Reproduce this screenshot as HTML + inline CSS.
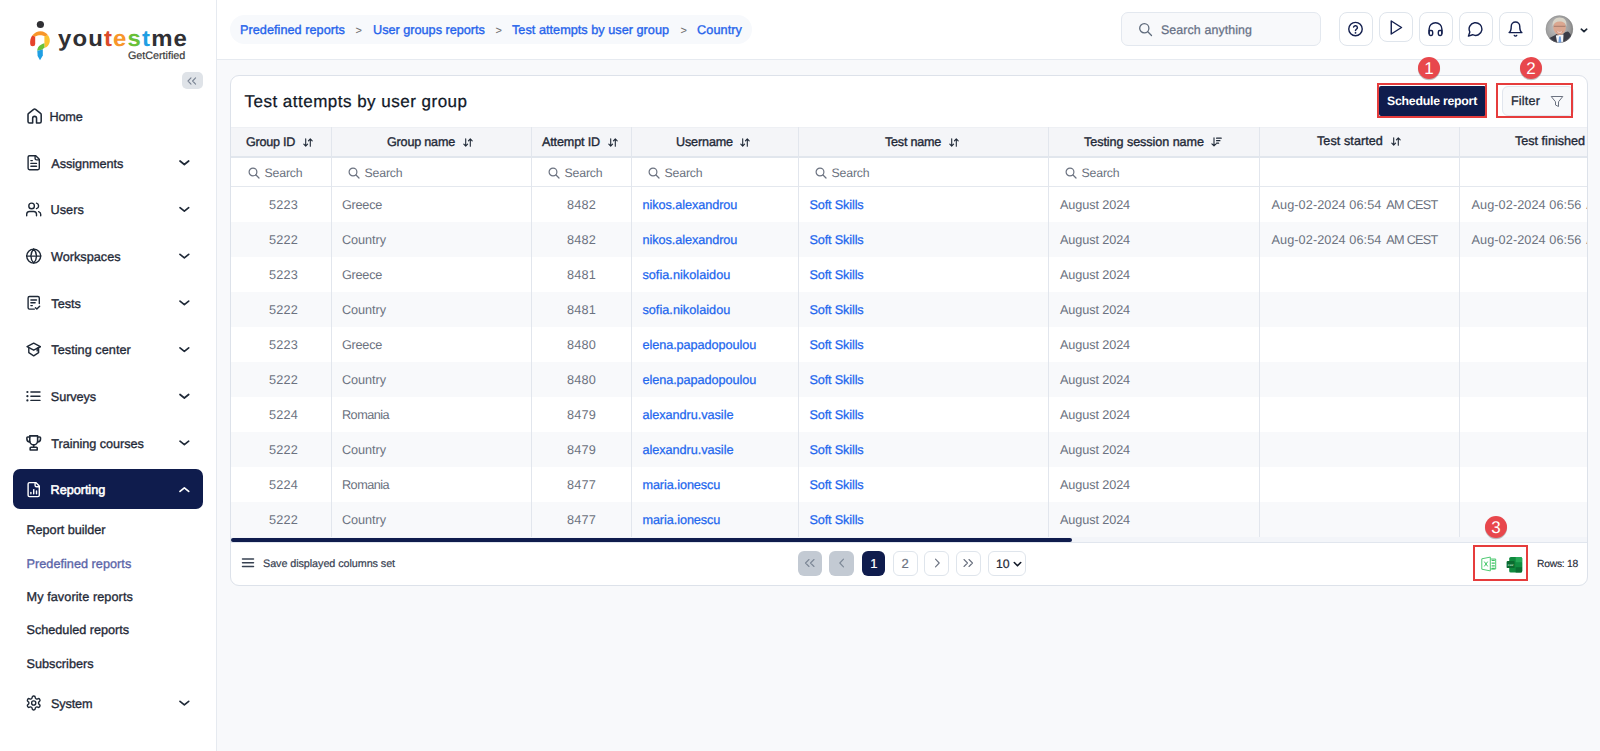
<!DOCTYPE html>
<html lang="en">
<head>
<meta charset="utf-8">
<title>Test attempts by user group</title>
<style>
*{box-sizing:border-box;margin:0;padding:0}
html,body{width:1600px;height:751px;overflow:hidden}
body{text-rendering:geometricPrecision;font-family:"Liberation Sans",sans-serif;background:#f8f9fb;color:#1a2233;position:relative;font-size:13px}
.abs{position:absolute}
.t{position:absolute;white-space:nowrap;line-height:1}
#side{position:absolute;left:0;top:0;width:217px;height:751px;background:#fff;border-right:1px solid #e6eaf0}
.logo{font-weight:bold;transform:scaleX(1.06);transform-origin:0 0}
.cert{color:#3a3a3a;-webkit-text-stroke:0.2px}
.nav{color:#1f2937;-webkit-text-stroke:0.33px}
.sub{color:#1f2937;-webkit-text-stroke:0.33px}
.ico{position:absolute;left:25px;width:18px;height:18px;fill:none;stroke:#1f2937;stroke-width:2;stroke-linecap:round;stroke-linejoin:round}
.chev{position:absolute;left:178.500px;width:12px;height:7px;fill:none;stroke:#1f2937;stroke-width:1.8;stroke-linecap:round;stroke-linejoin:round}
#top{position:absolute;left:217px;top:0;width:1383px;height:60px;background:#fff;border-bottom:1px solid #e6eaf0}
#card{position:absolute;left:230px;top:75px;width:1358px;height:511px;background:#fff;border:1px solid #dde2ea;border-radius:9px;overflow:hidden}
.bc{color:#2563eb;-webkit-text-stroke:0.35px}
.bcs{position:absolute;top:23.300px;font-size:11px;color:#6f6f6f;line-height:16px}
.srch{color:#667085;-webkit-text-stroke:0.25px}
.ib{position:absolute;width:33.500px;height:33.300px;border:1px solid #dfe5ec;border-radius:8px;background:#fff}
.ib svg{position:absolute;left:7.300px;top:6.300px;width:17px;height:17px;fill:none;stroke:#14204f;stroke-width:2;stroke-linecap:round;stroke-linejoin:round}
.title{color:#111827;-webkit-text-stroke:0.25px}
.th{color:#1f2937;-webkit-text-stroke:0.35px}
.flt{color:#6b7280}
.td{color:#6b7280}
.lnk{color:#2166ee;-webkit-text-stroke:0.25px}
.save{color:#374151;-webkit-text-stroke:0.2px}
.rows{color:#1f2937;-webkit-text-stroke:0.15px}
.pb{top:551px;height:24.600px;border-radius:6px;font-size:13px;line-height:24.600px;text-align:center;color:#6b7280}
.pb span{-webkit-text-stroke:0.2px}
.sched{font-weight:bold;color:#fff}
.filt{color:#1f2937;-webkit-text-stroke:0.3px}
.badge{width:22px;height:22px;border-radius:11px;background:#e8474c;color:#fff;box-shadow:0 1px 2px rgba(0,0,0,.35);overflow:visible}
.badge span{position:absolute;left:-39px;top:-39px;width:100px;height:100px;font-size:68px;line-height:100px;text-align:center;transform:scale(0.25);transform-origin:50% 50%}
.pb span.big{position:absolute;left:50%;top:50%;width:100px;height:100px;margin:-50px 0 0 -50px;font-size:52px;line-height:100px;text-align:center;transform:scale(0.25)}
.bc{font-size:12.7px}
.title{font-size:17px}
.th{font-size:12.6px}
.flt{font-size:12.3px}
.td{font-size:12.7px}
.save{font-size:10.8px}
.rows{font-size:10.3px}
.sched{font-size:12.3px}
.filt{font-size:12.6px}
.nav{font-size:12.7px}
.sub{font-size:12.7px}
.srch{font-size:12.4px}
.logo{font-size:22.6px}
.cert{font-size:10.8px}

</style>
</head>
<body>
<div id="side">
<svg class="abs" style="left:26px;top:18px" width="28" height="46" viewBox="26 18 28 46">
<circle cx="40.400" cy="24.500" r="3.600" fill="#303034"/>
<path d="M30.200 44 C29.900 41,30.500 38,32.200 35.600 L35.200 36.500 L35.200 44 A2.500 2.300 0 0 1 30.200 44Z" fill="#e6432a"/>
<path d="M32.200 35.600 C34.500 32.500,37.500 31.200,40.500 31.200 C43.800 31.200,46.500 32.800,48.200 35.600 L44.400 36.300 C43 35.300,42 35.200,40.300 35.200 C38.500 35.200,36.800 35.400,35.200 36.500Z" fill="#f8962a"/>
<path d="M44.400 36.300 L48.200 35.600 C50.300 38.500,50.500 43,48 45.800 C47 47,45.600 47.600,44.400 47.900 L44.400 43.200Z" fill="#fbc230"/>
<path d="M44.400 43.200 L44.400 47.900 C43.200 48.300,42.800 48.800,42.800 49.600 L37.300 50.700 C37.300 47,40 44.500,44.400 43.200Z" fill="#69c038"/>
<path d="M37.300 50.700 L42.800 49.600 L42.800 55.500 L40 60.300 L37.600 56Z" fill="#1f9fe3"/>
</svg>
<div class="t logo" style="left:57.5px;top:28.07px;letter-spacing:1.07px"><span style="color:#303034">you</span><span style="color:#da4a2b">t</span><span style="color:#f8962a">e</span><span style="color:#69c038">s</span><span style="color:#1f9fe3">t</span><span style="color:#303034">me</span></div>
<div class="t cert" style="left:128px;top:51.26px;letter-spacing:-0.03px">GetCertified</div>
<div class="abs" style="left:182px;top:72px;width:20.500px;height:16.600px;background:#dfe3e8;border-radius:5px"><svg class="abs" style="left:5.300px;top:4.500px" width="10" height="8" viewBox="0 0 10 8" fill="none" stroke="#7a8494" stroke-width="1.100" stroke-linecap="round" stroke-linejoin="round"><path d="M4 0.800L1 4 4 7.200"/><path d="M8.600 0.800L5.600 4 8.600 7.200"/></svg></div>

<div class="t nav" style="left:49.5px;top:110.85px;letter-spacing:-0.21px">Home</div>

<div class="t nav" style="left:51.3px;top:157.55px;letter-spacing:-0.07px">Assignments</div>


<div class="t nav" style="left:50.5px;top:204.25px;letter-spacing:0.03px">Users</div>


<div class="t nav" style="left:51px;top:250.95px;letter-spacing:0.00px">Workspaces</div>


<div class="t nav" style="left:51.3px;top:297.65px;letter-spacing:-0.00px">Tests</div>


<div class="t nav" style="left:51.3px;top:344.35px;letter-spacing:0.04px">Testing center</div>


<div class="t nav" style="left:50.8px;top:391.05px;letter-spacing:-0.09px">Surveys</div>


<div class="t nav" style="left:51.3px;top:437.75px;letter-spacing:-0.05px">Training courses</div>

<div class="abs" style="left:13px;top:469px;width:190px;height:40px;background:#0f1c4d;border-radius:7px"></div>

<div class="t nav" style="left:50.6px;top:484.45px;letter-spacing:-0.05px;color:#fff;-webkit-text-stroke:0.55px #fff">Reporting</div>

<div class="t sub" style="left:26.5px;top:524.35px;letter-spacing:-0.05px;color:#1f2937">Report builder</div>
<div class="t sub" style="left:26.5px;top:557.65px;letter-spacing:0.02px;color:#5a64a8">Predefined reports</div>
<div class="t sub" style="left:26.5px;top:591.05px;letter-spacing:0.07px;color:#1f2937">My favorite reports</div>
<div class="t sub" style="left:26.5px;top:624.35px;letter-spacing:-0.02px;color:#1f2937">Scheduled reports</div>
<div class="t sub" style="left:26.5px;top:657.75px;letter-spacing:0.01px;color:#1f2937">Subscribers</div>

<div class="t nav" style="left:51px;top:697.85px;letter-spacing:-0.14px">System</div>

<svg class="abs" style="left:0;top:0" width="216" height="751" viewBox="0 0 216 751" fill="none" stroke-linecap="round" stroke-linejoin="round"><svg x="25.30" y="106.70" width="18.6" height="18.6" viewBox="0 0 24 24" stroke="#1f2937" stroke-width="2"><path d="M9.500 21H5.500a2 2 0 0 1-2-2V10.300a2 2 0 0 1 .800-1.600l6.500-5.200a2 2 0 0 1 2.400 0l6.500 5.200a2 2 0 0 1 .800 1.600V19a2 2 0 0 1-2 2H14.500V15a2.500 2.500 0 0 0-5 0Z"/></svg><svg x="25.30" y="154.30" width="16.8" height="16.8" viewBox="0 0 24 24" stroke="#1f2937" stroke-width="2"><path d="M15 2H6a2 2 0 0 0-2 2v16a2 2 0 0 0 2 2h12a2 2 0 0 0 2-2V7Z"/><path d="M14 2v4a2 2 0 0 0 2 2h4"/><path d="M10 9H8"/><path d="M16 13H8"/><path d="M16 17H8"/></svg><svg x="178" y="159.00" width="12" height="7" viewBox="0 0 12 7" stroke="#1f2937" stroke-width="1.700"><path d="M2 2l4.350 3.500 4.350-3.500"/></svg><svg x="25.30" y="201.00" width="16.8" height="16.8" viewBox="0 0 24 24" stroke="#1f2937" stroke-width="2"><path d="M16 21v-2a4 4 0 0 0-4-4H6a4 4 0 0 0-4 4v2"/><circle cx="9" cy="7" r="4"/><path d="M22 21v-2a4 4 0 0 0-3-3.87"/><path d="M16 3.13a4 4 0 0 1 0 7.75"/></svg><svg x="178" y="205.70" width="12" height="7" viewBox="0 0 12 7" stroke="#1f2937" stroke-width="1.700"><path d="M2 2l4.350 3.500 4.350-3.500"/></svg><svg x="25.30" y="247.70" width="16.8" height="16.8" viewBox="0 0 24 24" stroke="#1f2937" stroke-width="2"><circle cx="12" cy="12" r="10"/><path d="M12 2a14.5 14.5 0 0 0 0 20 14.5 14.5 0 0 0 0-20"/><path d="M2 12h20"/></svg><svg x="178" y="252.40" width="12" height="7" viewBox="0 0 12 7" stroke="#1f2937" stroke-width="1.700"><path d="M2 2l4.350 3.500 4.350-3.500"/></svg><svg x="25.30" y="294.40" width="16.8" height="16.8" viewBox="0 0 24 24" stroke="#1f2937" stroke-width="2"><path d="M20 13V5a2 2 0 0 0-2-2H6a2 2 0 0 0-2 2v14a2 2 0 0 0 2 2h7"/><path d="M8 8h8"/><path d="M8 12h6"/><path d="M8 16h2"/><path d="M14.5 19l2 2 4-4"/></svg><svg x="178" y="299.10" width="12" height="7" viewBox="0 0 12 7" stroke="#1f2937" stroke-width="1.700"><path d="M2 2l4.350 3.500 4.350-3.500"/></svg><svg x="25.30" y="341.10" width="16.8" height="16.8" viewBox="0 0 24 24" stroke="#1f2937" stroke-width="2"><path d="M12 3l9.5 5L12 13 2.500 8z"/><path d="M5 9.500V16.500l7 4.500 7-4.500V9.500"/><path d="M21.500 8l-4.500 2.500v3.500"/></svg><svg x="178" y="345.80" width="12" height="7" viewBox="0 0 12 7" stroke="#1f2937" stroke-width="1.700"><path d="M2 2l4.350 3.500 4.350-3.500"/></svg><svg x="25.30" y="387.80" width="16.8" height="16.8" viewBox="0 0 24 24" stroke="#1f2937" stroke-width="2"><path d="M3 6h.01" stroke-width="3.200"/><path d="M3 12h.01" stroke-width="3.200"/><path d="M3 18h.01" stroke-width="3.200"/><path d="M8 6h13"/><path d="M8 12h13"/><path d="M8 18h13"/></svg><svg x="178" y="392.50" width="12" height="7" viewBox="0 0 12 7" stroke="#1f2937" stroke-width="1.700"><path d="M2 2l4.350 3.500 4.350-3.500"/></svg><svg x="24.30" y="433.50" width="18.8" height="18.8" viewBox="0 0 24 24" stroke="#1f2937" stroke-width="2"><path d="M7 4.500H4.300a1 1 0 0 0-1 1V7a3.700 3.700 0 0 0 3.700 3.700"/><path d="M17 4.500h2.700a1 1 0 0 1 1 1V7a3.700 3.700 0 0 1-3.700 3.700"/><path d="M7 3h10v6.500a5 5 0 0 1-10 0z"/><path d="M12 14.500v3"/><path d="M8.500 17.500h7a1 1 0 0 1 1 1V21h-9v-2.500a1 1 0 0 1 1-1z"/></svg><svg x="178" y="439.20" width="12" height="7" viewBox="0 0 12 7" stroke="#1f2937" stroke-width="1.700"><path d="M2 2l4.350 3.500 4.350-3.500"/></svg><svg x="25.30" y="481.20" width="16.8" height="16.8" viewBox="0 0 24 24" stroke="#fff" stroke-width="2"><path d="M15 2H6a2 2 0 0 0-2 2v16a2 2 0 0 0 2 2h12a2 2 0 0 0 2-2V7Z"/><path d="M14 2v4a2 2 0 0 0 2 2h4"/><path d="M8 18v-2"/><path d="M12 18v-6"/><path d="M16 18v-4"/></svg><svg x="178" y="485.90" width="12" height="7" viewBox="0 0 12 7" stroke="#fff" stroke-width="1.700"><path d="M2 5.500L6.350 2l4.350 3.500"/></svg><svg x="25.30" y="694.60" width="16.8" height="16.8" viewBox="0 0 24 24" stroke="#1f2937" stroke-width="2"><path d="M12.220 2h-.44a2 2 0 0 0-2 2v.18a2 2 0 0 1-1 1.730l-.43.250a2 2 0 0 1-2 0l-.15-.08a2 2 0 0 0-2.730.730l-.22.380a2 2 0 0 0 .730 2.730l.15.100a2 2 0 0 1 1 1.720v.51a2 2 0 0 1-1 1.740l-.15.090a2 2 0 0 0-.730 2.730l.22.380a2 2 0 0 0 2.730.730l.15-.08a2 2 0 0 1 2 0l.43.250a2 2 0 0 1 1 1.730V20a2 2 0 0 0 2 2h.44a2 2 0 0 0 2-2v-.18a2 2 0 0 1 1-1.730l.43-.25a2 2 0 0 1 2 0l.15.080a2 2 0 0 0 2.730-.73l.22-.39a2 2 0 0 0-.73-2.730l-.15-.08a2 2 0 0 1-1-1.740v-.5a2 2 0 0 1 1-1.740l.15-.09a2 2 0 0 0 .73-2.730l-.22-.38a2 2 0 0 0-2.730-.73l-.15.080a2 2 0 0 1-2 0l-.43-.25a2 2 0 0 1-1-1.730V4a2 2 0 0 0-2-2z"/><circle cx="12" cy="12" r="3"/></svg><svg x="178" y="699.30" width="12" height="7" viewBox="0 0 12 7" stroke="#1f2937" stroke-width="1.700"><path d="M2 2l4.350 3.500 4.350-3.500"/></svg></svg>
</div>
<div id="top"></div>
<div class="abs" style="left:230px;top:14.500px;width:522px;height:29.500px;background:#f7f9fc;border-radius:15px"></div>
<div class="t bc" style="left:240px;top:24.45px;letter-spacing:0.03px">Predefined reports</div>
<div class="t bc" style="left:373px;top:24.45px;letter-spacing:-0.01px">User groups reports</div>
<div class="t bc" style="left:512px;top:24.45px;letter-spacing:0.02px">Test attempts by user group</div>
<div class="t bc" style="left:697px;top:24.45px;letter-spacing:0.08px">Country</div>
<div class="bcs" style="left:355.5px">&gt;</div>
<div class="bcs" style="left:495.5px">&gt;</div>
<div class="bcs" style="left:680.5px">&gt;</div>
<div class="abs" style="left:1120.800px;top:12.100px;width:200px;height:33.500px;background:#f8f9fb;border:1px solid #e3e8ef;border-radius:7px"></div>
<svg class="abs" style="left:1138px;top:22px" width="15" height="15" viewBox="0 0 15 15" fill="none" stroke="#5f6b7c" stroke-width="1.300" stroke-linecap="round"><circle cx="6.300" cy="6.300" r="4.600"/><path d="M9.800 9.800L13.500 13.500"/></svg>
<div class="t srch" style="left:1161px;top:23.50px;letter-spacing:0.10px">Search anything</div>
<div class="ib" style="left:1339px;top:12.4px"><svg viewBox="0 -0.800 24 24"><circle cx="12" cy="12" r="9.500"/><path d="M9.300 9.200a2.800 2.800 0 0 1 5.400.9c0 1.800-2.700 2.500-2.700 3.900" stroke-width="2.100"/><path d="M12 17.300h.01" stroke-width="2.600"/></svg></div>
<div class="ib" style="left:1379.3px;top:11.9px;height:30.300px"><svg viewBox="0.400 0 24 24"><path d="M5 2.800l14.500 9.200L5 21.200z"/></svg></div>
<div class="ib" style="left:1419px;top:12.4px"><svg viewBox="0 -0.800 24 24"><path d="M3 18v-6a9 9 0 0 1 18 0v6"/><path d="M21 19a2 2 0 0 1-2 2h-1a2 2 0 0 1-2-2v-3a2 2 0 0 1 2-2h3zM3 19a2 2 0 0 0 2 2h1a2 2 0 0 0 2-2v-3a2 2 0 0 0-2-2H3z"/></svg></div>
<div class="ib" style="left:1459px;top:12.4px"><svg viewBox="0 -0.800 24 24"><path d="M7.900 20A9 9 0 1 0 4 16.100L2 22Z"/></svg></div>
<div class="ib" style="left:1499px;top:12.4px"><svg viewBox="0 -0.800 24 24"><path d="M6 8a6 6 0 0 1 12 0c0 7 3 9 3 9H3s3-2 3-9"/><path d="M10.300 21a1.940 1.940 0 0 0 3.400 0"/></svg></div>
<svg class="abs" style="left:1544px;top:14px" width="30" height="30" viewBox="0 0 30 30">
<defs><clipPath id="av"><circle cx="15.400" cy="15.100" r="13.600"/></clipPath>
<radialGradient id="avbg" cx="0.45" cy="0.45" r="0.6"><stop offset="0" stop-color="#c9c9c9"/><stop offset="0.7" stop-color="#9b9b9b"/><stop offset="1" stop-color="#6a6a6a"/></radialGradient></defs>
<g clip-path="url(#av)">
<rect width="30" height="30" fill="url(#avbg)"/>
<path d="M3 30 L5.500 24 C8 22.500,11 21.500,12.500 20 L18.500 20.500 C20 18.500,22.500 17.500,24 17.500 C26.500 19.500,28.500 23,29 30Z" fill="#3b3c46"/>
<path d="M11.800 21.500 L13.500 30 L19 30 L19.500 20.500Z" fill="#f4f4f6"/>
<path d="M15 22.500 L14.300 29.500 L17.300 29.500 L16.800 22.500Z" fill="#6f9fe0"/>
<ellipse cx="15.600" cy="13.300" rx="6.300" ry="7.700" fill="#dba790"/>
<path d="M11.500 16.500 Q15.500 22.500 19.800 16.500 Q15.500 19.500 11.500 16.500Z" fill="#c98673"/>
<path d="M8.700 12.500 C7.800 6.500,11.500 3.500,15.500 3.500 C20.500 3.500,23.300 6.500,22.300 12.500 C21.500 9,19.500 7.600,15.600 7.600 C12 7.600,9.800 9,8.700 12.500Z" fill="#d9d4c8"/>
<path d="M9.800 12.300h11.600" stroke="#7a5a50" stroke-width="0.700" opacity="0.800"/>
<path d="M13.300 17.800 Q15.600 19.300 18 17.800" stroke="#f5e9e4" stroke-width="0.900" fill="none"/>
</g><circle cx="15.400" cy="15.100" r="13.400" fill="none" stroke="#8a8a8a" stroke-width="0.500" opacity="0.700"/></svg>
<svg class="abs" style="left:1578.700px;top:26.800px" width="10" height="7" viewBox="0 0 10 7" fill="none" stroke="#1f2937" stroke-width="1.700" stroke-linecap="round" stroke-linejoin="round"><path d="M2.300 2.200L5 4.600 7.700 2.200"/></svg>
<div id="card">
<div class="abs" style="left:-231px;top:-76px;width:1600px;height:751px">
<div class="t title" style="left:244.5px;top:92.71px;letter-spacing:0.49px">Test attempts by user group</div>
<div class="abs" style="left:231px;top:126.500px;width:1357px;height:31.500px;background:#f4f5f8;border-top:1px solid #eef0f4;border-bottom:2px solid #e1e6ed"></div>
<div class="abs" style="left:231px;top:187px;width:1357px;height:35px;background:#fff"></div>
<div class="abs" style="left:231px;top:222px;width:1357px;height:35px;background:#f8f9fb"></div>
<div class="abs" style="left:231px;top:257px;width:1357px;height:35px;background:#fff"></div>
<div class="abs" style="left:231px;top:292px;width:1357px;height:35px;background:#f8f9fb"></div>
<div class="abs" style="left:231px;top:327px;width:1357px;height:35px;background:#fff"></div>
<div class="abs" style="left:231px;top:362px;width:1357px;height:35px;background:#f8f9fb"></div>
<div class="abs" style="left:231px;top:397px;width:1357px;height:35px;background:#fff"></div>
<div class="abs" style="left:231px;top:432px;width:1357px;height:35px;background:#f8f9fb"></div>
<div class="abs" style="left:231px;top:467px;width:1357px;height:35px;background:#fff"></div>
<div class="abs" style="left:231px;top:502px;width:1357px;height:35px;background:#f8f9fb"></div>
<div class="abs" style="left:231px;top:186px;width:1357px;height:1.300px;background:#e4e8ee"></div>
<div class="abs" style="left:330.5px;top:127px;width:1.500px;height:410px;background:#e2e6ed"></div>
<div class="abs" style="left:530.5px;top:127px;width:1.500px;height:410px;background:#e2e6ed"></div>
<div class="abs" style="left:630.5px;top:127px;width:1.500px;height:410px;background:#e2e6ed"></div>
<div class="abs" style="left:797.5px;top:127px;width:1.500px;height:410px;background:#e2e6ed"></div>
<div class="abs" style="left:1047.5px;top:127px;width:1.500px;height:410px;background:#e2e6ed"></div>
<div class="abs" style="left:1258.5px;top:127px;width:1.500px;height:410px;background:#e2e6ed"></div>
<div class="abs" style="left:1458.5px;top:127px;width:1.500px;height:410px;background:#e2e6ed"></div>
<div class="t th" style="left:246px;top:136.23px;letter-spacing:-0.26px">Group ID</div>
<svg class="abs" style="left:303px;top:137.9px" width="10" height="9" viewBox="0 0 10 9" fill="none" stroke="#1f2937" stroke-width="1.100" stroke-linecap="round" stroke-linejoin="round"><path d="M2.700 0.800v7.200M0.800 6.200l1.900 1.900 1.900-1.900"/><path d="M7.300 8.200V1M5.400 2.800L7.300 0.900l1.900 1.900"/></svg>
<div class="t th" style="left:387px;top:136.23px;letter-spacing:-0.20px">Group name</div>
<svg class="abs" style="left:463px;top:137.9px" width="10" height="9" viewBox="0 0 10 9" fill="none" stroke="#1f2937" stroke-width="1.100" stroke-linecap="round" stroke-linejoin="round"><path d="M2.700 0.800v7.200M0.800 6.200l1.900 1.900 1.900-1.900"/><path d="M7.300 8.200V1M5.400 2.800L7.300 0.900l1.900 1.900"/></svg>
<div class="t th" style="left:542px;top:136.23px;letter-spacing:-0.15px">Attempt ID</div>
<svg class="abs" style="left:608px;top:137.9px" width="10" height="9" viewBox="0 0 10 9" fill="none" stroke="#1f2937" stroke-width="1.100" stroke-linecap="round" stroke-linejoin="round"><path d="M2.700 0.800v7.200M0.800 6.200l1.900 1.900 1.900-1.900"/><path d="M7.300 8.200V1M5.400 2.800L7.300 0.900l1.900 1.900"/></svg>
<div class="t th" style="left:676px;top:136.23px;letter-spacing:-0.14px">Username</div>
<svg class="abs" style="left:740px;top:137.9px" width="10" height="9" viewBox="0 0 10 9" fill="none" stroke="#1f2937" stroke-width="1.100" stroke-linecap="round" stroke-linejoin="round"><path d="M2.700 0.800v7.200M0.800 6.200l1.900 1.900 1.900-1.900"/><path d="M7.300 8.200V1M5.400 2.800L7.300 0.900l1.900 1.900"/></svg>
<div class="t th" style="left:885px;top:136.23px;letter-spacing:-0.23px">Test name</div>
<svg class="abs" style="left:949px;top:137.9px" width="10" height="9" viewBox="0 0 10 9" fill="none" stroke="#1f2937" stroke-width="1.100" stroke-linecap="round" stroke-linejoin="round"><path d="M2.700 0.800v7.200M0.800 6.200l1.900 1.900 1.900-1.900"/><path d="M7.300 8.200V1M5.400 2.800L7.300 0.900l1.900 1.900"/></svg>
<div class="t th" style="left:1084px;top:136.23px;letter-spacing:-0.06px">Testing session name</div>
<svg class="abs" style="left:1211px;top:137.4px" width="11" height="10" viewBox="0 0 11 10" fill="none" stroke="#1f2937" stroke-width="1.100" stroke-linecap="round" stroke-linejoin="round"><path d="M3 0.800v8M0.900 6.800L3 8.900l2.100-2.100"/><path d="M5.600 1.200h4.600M5.600 3.700h3.300M5.600 6.200h2" stroke-width="1.300"/></svg>
<div class="t th" style="left:1317px;top:135.23px;letter-spacing:0.07px">Test started</div>
<svg class="abs" style="left:1391px;top:136.9px" width="10" height="9" viewBox="0 0 10 9" fill="none" stroke="#1f2937" stroke-width="1.100" stroke-linecap="round" stroke-linejoin="round"><path d="M2.700 0.800v7.200M0.800 6.200l1.900 1.900 1.900-1.900"/><path d="M7.300 8.200V1M5.400 2.800L7.300 0.900l1.900 1.900"/></svg>
<div class="t th" style="left:1515px;top:135.23px;letter-spacing:-0.00px">Test finished</div>
<svg class="abs" style="left:247.5px;top:166.700px" width="12" height="12" viewBox="0 0 12 12" fill="none" stroke="#6b7280" stroke-width="1.200" stroke-linecap="round"><circle cx="5" cy="5" r="3.900"/><path d="M8 8l3 3"/></svg>
<div class="t flt" style="left:264.5px;top:166.79px;letter-spacing:-0.16px">Search</div>
<svg class="abs" style="left:347.5px;top:166.700px" width="12" height="12" viewBox="0 0 12 12" fill="none" stroke="#6b7280" stroke-width="1.200" stroke-linecap="round"><circle cx="5" cy="5" r="3.900"/><path d="M8 8l3 3"/></svg>
<div class="t flt" style="left:364.5px;top:166.79px;letter-spacing:-0.16px">Search</div>
<svg class="abs" style="left:547.5px;top:166.700px" width="12" height="12" viewBox="0 0 12 12" fill="none" stroke="#6b7280" stroke-width="1.200" stroke-linecap="round"><circle cx="5" cy="5" r="3.900"/><path d="M8 8l3 3"/></svg>
<div class="t flt" style="left:564.5px;top:166.79px;letter-spacing:-0.16px">Search</div>
<svg class="abs" style="left:647.5px;top:166.700px" width="12" height="12" viewBox="0 0 12 12" fill="none" stroke="#6b7280" stroke-width="1.200" stroke-linecap="round"><circle cx="5" cy="5" r="3.900"/><path d="M8 8l3 3"/></svg>
<div class="t flt" style="left:664.5px;top:166.79px;letter-spacing:-0.16px">Search</div>
<svg class="abs" style="left:814.5px;top:166.700px" width="12" height="12" viewBox="0 0 12 12" fill="none" stroke="#6b7280" stroke-width="1.200" stroke-linecap="round"><circle cx="5" cy="5" r="3.900"/><path d="M8 8l3 3"/></svg>
<div class="t flt" style="left:831.5px;top:166.79px;letter-spacing:-0.16px">Search</div>
<svg class="abs" style="left:1064.5px;top:166.700px" width="12" height="12" viewBox="0 0 12 12" fill="none" stroke="#6b7280" stroke-width="1.200" stroke-linecap="round"><circle cx="5" cy="5" r="3.900"/><path d="M8 8l3 3"/></svg>
<div class="t flt" style="left:1081.5px;top:166.79px;letter-spacing:-0.16px">Search</div>
<div class="t td" style="left:269px;top:199.45px;letter-spacing:0.19px">5223</div>
<div class="t td" style="left:342px;top:199.45px;letter-spacing:-0.27px">Greece</div>
<div class="t td" style="left:567px;top:199.45px;letter-spacing:0.19px">8482</div>
<div class="t td lnk" style="left:642.4px;top:199.45px;letter-spacing:-0.06px">nikos.alexandrou</div>
<div class="t td lnk" style="left:809.4px;top:199.45px;letter-spacing:-0.14px">Soft Skills</div>
<div class="t td" style="left:1060px;top:199.45px;letter-spacing:-0.11px">August 2024</div>
<div class="t td" style="left:1271.5px;top:199.45px;word-spacing:1.300px"><span style="word-spacing:0;letter-spacing:0.08px">Aug-02-2024 06:54</span> <span style="word-spacing:0;letter-spacing:-0.74px">AM CEST</span></div>
<div class="t td" style="left:1471.5px;top:199.45px;word-spacing:1.300px"><span style="word-spacing:0;letter-spacing:0.08px">Aug-02-2024 06:56</span> <span style="word-spacing:0;letter-spacing:-0.74px">AM CEST</span></div>
<div class="t td" style="left:269px;top:234.45px;letter-spacing:0.19px">5222</div>
<div class="t td" style="left:342px;top:234.45px;letter-spacing:-0.06px">Country</div>
<div class="t td" style="left:567px;top:234.45px;letter-spacing:0.19px">8482</div>
<div class="t td lnk" style="left:642.4px;top:234.45px;letter-spacing:-0.06px">nikos.alexandrou</div>
<div class="t td lnk" style="left:809.4px;top:234.45px;letter-spacing:-0.14px">Soft Skills</div>
<div class="t td" style="left:1060px;top:234.45px;letter-spacing:-0.11px">August 2024</div>
<div class="t td" style="left:1271.5px;top:234.45px;word-spacing:1.300px"><span style="word-spacing:0;letter-spacing:0.08px">Aug-02-2024 06:54</span> <span style="word-spacing:0;letter-spacing:-0.74px">AM CEST</span></div>
<div class="t td" style="left:1471.5px;top:234.45px;word-spacing:1.300px"><span style="word-spacing:0;letter-spacing:0.08px">Aug-02-2024 06:56</span> <span style="word-spacing:0;letter-spacing:-0.74px">AM CEST</span></div>
<div class="t td" style="left:269px;top:269.45px;letter-spacing:0.19px">5223</div>
<div class="t td" style="left:342px;top:269.45px;letter-spacing:-0.27px">Greece</div>
<div class="t td" style="left:567px;top:269.45px;letter-spacing:0.19px">8481</div>
<div class="t td lnk" style="left:642.4px;top:269.45px;letter-spacing:0.03px">sofia.nikolaidou</div>
<div class="t td lnk" style="left:809.4px;top:269.45px;letter-spacing:-0.14px">Soft Skills</div>
<div class="t td" style="left:1060px;top:269.45px;letter-spacing:-0.11px">August 2024</div>
<div class="t td" style="left:269px;top:304.45px;letter-spacing:0.19px">5222</div>
<div class="t td" style="left:342px;top:304.45px;letter-spacing:-0.06px">Country</div>
<div class="t td" style="left:567px;top:304.45px;letter-spacing:0.19px">8481</div>
<div class="t td lnk" style="left:642.4px;top:304.45px;letter-spacing:0.03px">sofia.nikolaidou</div>
<div class="t td lnk" style="left:809.4px;top:304.45px;letter-spacing:-0.14px">Soft Skills</div>
<div class="t td" style="left:1060px;top:304.45px;letter-spacing:-0.11px">August 2024</div>
<div class="t td" style="left:269px;top:339.45px;letter-spacing:0.19px">5223</div>
<div class="t td" style="left:342px;top:339.45px;letter-spacing:-0.27px">Greece</div>
<div class="t td" style="left:567px;top:339.45px;letter-spacing:0.19px">8480</div>
<div class="t td lnk" style="left:642.4px;top:339.45px;letter-spacing:-0.06px">elena.papadopoulou</div>
<div class="t td lnk" style="left:809.4px;top:339.45px;letter-spacing:-0.14px">Soft Skills</div>
<div class="t td" style="left:1060px;top:339.45px;letter-spacing:-0.11px">August 2024</div>
<div class="t td" style="left:269px;top:374.45px;letter-spacing:0.19px">5222</div>
<div class="t td" style="left:342px;top:374.45px;letter-spacing:-0.06px">Country</div>
<div class="t td" style="left:567px;top:374.45px;letter-spacing:0.19px">8480</div>
<div class="t td lnk" style="left:642.4px;top:374.45px;letter-spacing:-0.06px">elena.papadopoulou</div>
<div class="t td lnk" style="left:809.4px;top:374.45px;letter-spacing:-0.14px">Soft Skills</div>
<div class="t td" style="left:1060px;top:374.45px;letter-spacing:-0.11px">August 2024</div>
<div class="t td" style="left:269px;top:409.45px;letter-spacing:0.19px">5224</div>
<div class="t td" style="left:342px;top:409.45px;letter-spacing:-0.54px">Romania</div>
<div class="t td" style="left:567px;top:409.45px;letter-spacing:0.19px">8479</div>
<div class="t td lnk" style="left:642.4px;top:409.45px;letter-spacing:-0.04px">alexandru.vasile</div>
<div class="t td lnk" style="left:809.4px;top:409.45px;letter-spacing:-0.14px">Soft Skills</div>
<div class="t td" style="left:1060px;top:409.45px;letter-spacing:-0.11px">August 2024</div>
<div class="t td" style="left:269px;top:444.45px;letter-spacing:0.19px">5222</div>
<div class="t td" style="left:342px;top:444.45px;letter-spacing:-0.06px">Country</div>
<div class="t td" style="left:567px;top:444.45px;letter-spacing:0.19px">8479</div>
<div class="t td lnk" style="left:642.4px;top:444.45px;letter-spacing:-0.04px">alexandru.vasile</div>
<div class="t td lnk" style="left:809.4px;top:444.45px;letter-spacing:-0.14px">Soft Skills</div>
<div class="t td" style="left:1060px;top:444.45px;letter-spacing:-0.11px">August 2024</div>
<div class="t td" style="left:269px;top:479.45px;letter-spacing:0.19px">5224</div>
<div class="t td" style="left:342px;top:479.45px;letter-spacing:-0.54px">Romania</div>
<div class="t td" style="left:567px;top:479.45px;letter-spacing:0.19px">8477</div>
<div class="t td lnk" style="left:642.4px;top:479.45px;letter-spacing:-0.08px">maria.ionescu</div>
<div class="t td lnk" style="left:809.4px;top:479.45px;letter-spacing:-0.14px">Soft Skills</div>
<div class="t td" style="left:1060px;top:479.45px;letter-spacing:-0.11px">August 2024</div>
<div class="t td" style="left:269px;top:514.45px;letter-spacing:0.19px">5222</div>
<div class="t td" style="left:342px;top:514.45px;letter-spacing:-0.06px">Country</div>
<div class="t td" style="left:567px;top:514.45px;letter-spacing:0.19px">8477</div>
<div class="t td lnk" style="left:642.4px;top:514.45px;letter-spacing:-0.08px">maria.ionescu</div>
<div class="t td lnk" style="left:809.4px;top:514.45px;letter-spacing:-0.14px">Soft Skills</div>
<div class="t td" style="left:1060px;top:514.45px;letter-spacing:-0.11px">August 2024</div>
<div class="abs" style="left:231px;top:537px;width:1357px;height:5px;background:#f3f5f9"></div>
<div class="abs" style="left:231px;top:537.500px;width:840.500px;height:4.200px;background:#0f1c4d;border-radius:3px"></div>
<div class="abs" style="left:231px;top:542px;width:1357px;height:1px;background:#e1e6ee"></div>
<svg class="abs" style="left:241px;top:557px" width="14" height="12" viewBox="0 0 14 12" fill="none" stroke="#374151" stroke-width="1.500" stroke-linecap="round"><path d="M1.500 2h11M1.500 5.700h11M1.500 9.400h11"/></svg>
<div class="t save" style="left:263px;top:558.86px;letter-spacing:-0.07px">Save displayed columns set</div>
<div class="abs pb" style="left:798px;width:24.3px;background:#c3cad3;"><svg class="abs" style="left:50%;top:50%;margin:-5px 0 0 -6.0px" width="12" height="10" viewBox="0 0 12 10" fill="none" stroke="#7c8796" stroke-width="1.100" stroke-linecap="round" stroke-linejoin="round"><path d="M5 1.500L1.500 5 5 8.500M10 1.500L6.500 5 10 8.500"/></svg></div>
<div class="abs pb" style="left:829.2px;width:24.8px;background:#c3cad3;"><svg class="abs" style="left:50%;top:50%;margin:-5px 0 0 -6.0px" width="12" height="10" viewBox="0 0 12 10" fill="none" stroke="#7c8796" stroke-width="1.100" stroke-linecap="round" stroke-linejoin="round"><path d="M7.500 1.200L3.800 5l3.700 3.800"/></svg></div>
<div class="abs pb" style="left:861.6px;width:23.6px;background:#0f1c4d;"><svg class="abs" style="left:0;top:0" width="24" height="25" viewBox="0 0 24 25"><text transform="translate(11.800 17) scale(0.25)" font-family="Liberation Sans,sans-serif" font-size="52" fill="#fff" stroke="#fff" stroke-width="0.800" text-anchor="middle">1</text></svg></div>
<div class="abs pb" style="left:892.5px;width:25px;background:#fff;border:1px solid #dfe5ec;"><span>2</span></div>
<div class="abs pb" style="left:924.4px;width:24.8px;background:#fff;border:1px solid #dfe5ec;"><svg class="abs" style="left:50%;top:50%;margin:-5px 0 0 -6.0px" width="12" height="10" viewBox="0 0 12 10" fill="none" stroke="#6b7280" stroke-width="1.100" stroke-linecap="round" stroke-linejoin="round"><path d="M4.500 1.200L8.200 5 4.500 8.800"/></svg></div>
<div class="abs pb" style="left:955.7px;width:25px;background:#fff;border:1px solid #dfe5ec;"><svg class="abs" style="left:50%;top:50%;margin:-5px 0 0 -6.0px" width="12" height="10" viewBox="0 0 12 10" fill="none" stroke="#6b7280" stroke-width="1.100" stroke-linecap="round" stroke-linejoin="round"><path d="M2 1.500L5.500 5 2 8.500M7 1.500L10.500 5 7 8.500"/></svg></div>
<div class="abs pb" style="left:988px;width:37.600px;background:#fff;border:1px solid #dfe5ec"><span style="position:absolute;left:7px;top:0;color:#1f2937;font-size:12.300px">10</span><svg class="abs" style="left:23.800px;top:8.500px" width="9" height="7" viewBox="0 0 9 7" fill="none" stroke="#111827" stroke-width="1.600" stroke-linecap="round" stroke-linejoin="round"><path d="M1.300 1.500L4.500 4.800 7.700 1.500"/></svg></div>
<svg class="abs" style="left:1480.500px;top:556px" width="16" height="16" viewBox="0 0 16 16" fill="none" stroke="#3cc463" stroke-width="0.900">
<path d="M9.300 3h5.400v10H9.300"/><path d="M10.600 4.400h3.200M10.600 7.100h3.200M10.600 9.800h3.200M10.600 12.500h3.200" stroke-width="1.300"/><path d="M0.800 2.800L9.300 1.100v13.800L0.800 13.200z" fill="#fff"/><path d="M3.300 5.600l3.400 4.800M6.700 5.600l-3.400 4.800" stroke-width="1"/></svg>
<svg class="abs" style="left:1506px;top:555.700px" width="17" height="17" viewBox="0 0 17 18" preserveAspectRatio="none">
<rect x="3.200" y="1" width="13" height="16.500" rx="1.600" fill="#0f8a3e"/><path d="M9.700 1h4.900a1.600 1.600 0 0 1 1.600 1.600v4.400h-6.500z" fill="#27a857"/><path d="M9.700 7h6.500v5h-6.500z" fill="#118f42"/><path d="M9.700 12h6.500v3.900a1.600 1.600 0 0 1-1.600 1.600h-4.900z" fill="#0a6e32"/>
<rect x="0.600" y="5.400" width="8" height="7.400" rx="1" fill="#0b6b30"/><text x="4.600" y="10.200" font-size="3.400" font-family="Liberation Sans,sans-serif" font-weight="bold" fill="#bfe8cd" text-anchor="middle">csv</text></svg>
<div class="t rows" style="left:1537px;top:559.58px;letter-spacing:-0.24px">Rows: 18</div>
</div></div>
<div class="abs" style="left:1378.500px;top:85.600px;width:107px;height:30.500px;background:#0f1c4d;border-radius:2px"></div>
<div class="t sched" style="left:1387px;top:94.89px;letter-spacing:-0.24px">Schedule report</div>
<div class="abs" style="left:1501.500px;top:85.600px;width:72px;height:30.500px;background:#f8f9fb;border:1px solid #e1e6ee;border-radius:6px"></div>
<div class="t filt" style="left:1511px;top:94.93px;letter-spacing:0.17px">Filter</div>
<svg class="abs" style="left:1550px;top:95px" width="14" height="13" viewBox="0 0 14 13" fill="none" stroke="#6b7280" stroke-width="1" stroke-linejoin="round"><path d="M1.200 1.500h11.600L8.500 6.800v4.700L5.500 10V6.800z"/></svg>
<div class="abs" style="left:1376.800px;top:83.400px;width:110.500px;height:34.400px;border:2.600px solid #e63c3c"></div>
<div class="abs" style="left:1495.800px;top:83.400px;width:77.500px;height:34.400px;border:2.600px solid #e63c3c"></div>
<div class="abs" style="left:1473.200px;top:545.300px;width:55px;height:35.500px;border:2.600px solid #e63c3c"></div>
<svg class="abs" style="left:1415.2px;top:54.0px;overflow:visible" width="28" height="30" viewBox="0 0 28 30"><circle cx="14" cy="15.200" r="11" fill="#000" opacity="0.18"/><circle cx="14" cy="14.700" r="11.300" fill="#000" opacity="0.080"/><circle cx="14" cy="14" r="11" fill="#e8474c"/><text transform="translate(14 20.100) scale(0.25)" font-family="Liberation Sans,sans-serif" font-size="68" fill="#fff" text-anchor="middle">1</text></svg>
<svg class="abs" style="left:1517.0px;top:53.6px;overflow:visible" width="28" height="30" viewBox="0 0 28 30"><circle cx="14" cy="15.200" r="11" fill="#000" opacity="0.18"/><circle cx="14" cy="14.700" r="11.300" fill="#000" opacity="0.080"/><circle cx="14" cy="14" r="11" fill="#e8474c"/><text transform="translate(14 20.100) scale(0.25)" font-family="Liberation Sans,sans-serif" font-size="68" fill="#fff" text-anchor="middle">2</text></svg>
<svg class="abs" style="left:1481.7px;top:512.8px;overflow:visible" width="28" height="30" viewBox="0 0 28 30"><circle cx="14" cy="15.200" r="11" fill="#000" opacity="0.18"/><circle cx="14" cy="14.700" r="11.300" fill="#000" opacity="0.080"/><circle cx="14" cy="14" r="11" fill="#e8474c"/><text transform="translate(14 20.100) scale(0.25)" font-family="Liberation Sans,sans-serif" font-size="68" fill="#fff" text-anchor="middle">3</text></svg>
</body>
</html>
